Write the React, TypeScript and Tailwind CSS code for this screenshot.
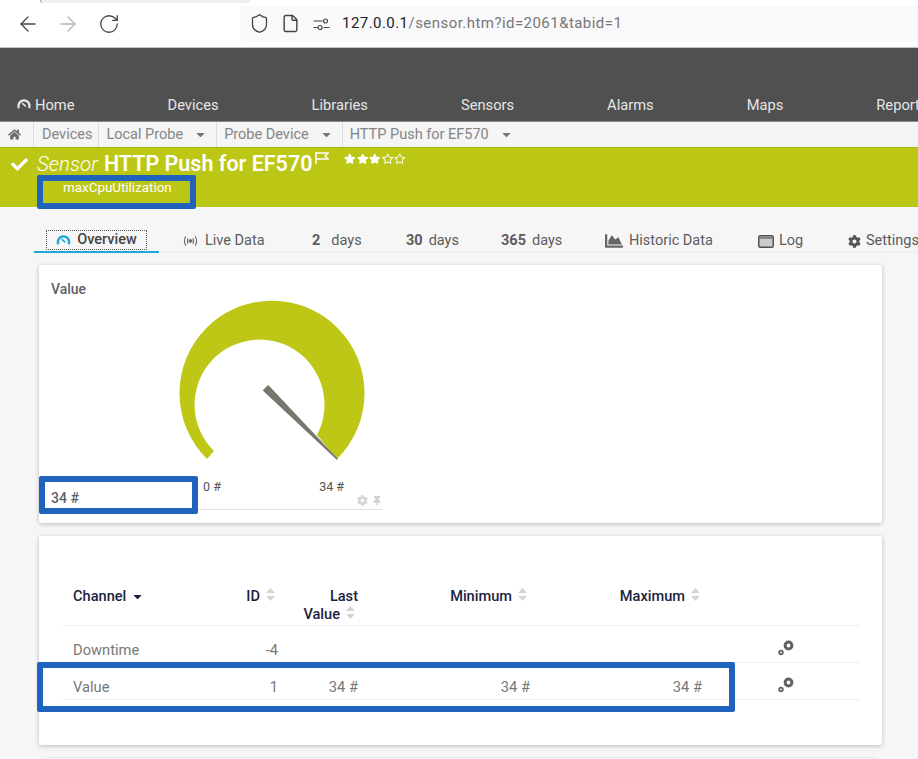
import { ArrowLeft, ArrowRight, RotateCw, Shield, File } from 'lucide-react';
import { FaHome, FaCog, FaThumbtack, FaChartArea, FaCheck, FaStar, FaRegStar, FaCaretDown } from 'react-icons/fa';

const NAV = ['Devices', 'Libraries', 'Sensors', 'Alarms', 'Maps', 'Reports'];
const ROWS = [
    { name: 'Downtime', id: '-4', last: '', min: '', max: '' },
    { name: 'Value', id: '1', last: '34 #', min: '34 #', max: '34 #' },
];
const GRID = 'grid grid-cols-[150px_66px_80px_172px_172px_1fr]';

const GaugeIcon = ({ className }: { className: string }) => (
    <svg viewBox="0 0 16 14" className={className} fill="none" stroke="currentColor">
        <path d="M2.5 11 A6 6 0 1 1 13.5 11" strokeWidth="2.6" />
        <path d="M6 5.5 L10 9" strokeWidth="1.6" />
    </svg>
);

const SortIcon = () => (
    <svg viewBox="0 0 9 13" className="ml-[6px] mb-[3px] h-[13px] w-[9px] shrink-0 fill-[#d4d4d4]">
        <path d="M4.5 0 L9 5 H0 Z" />
        <path d="M4.5 13 L9 8 H0 Z" />
    </svg>
);

const ChannelIcon = () => (
    <svg viewBox="0 0 16 16" className="h-[16px] w-[16px] fill-none stroke-[#606060]">
        <circle cx="10.5" cy="5.5" r="3.4" strokeWidth="3" />
        <circle cx="3" cy="12.5" r="1.8" strokeWidth="1.8" />
    </svg>
);

const Crumb = ({ label, caret }: { label: string; caret?: boolean }) => (
    <div className={`flex h-full items-center border-l border-[#dcdcdc] ${caret ? 'pl-[7px]' : 'pl-[8px] pr-[6px]'}`}>
        <span>{label}</span>
        {caret && <FaCaretDown className="ml-[11px] mr-[9px] text-[13px] text-[#777]" />}
    </div>
);

const Tab = ({ icon, children, className }: { icon?: React.ReactNode; children: React.ReactNode; className: string }) => (
    <div className={`flex shrink-0 items-center ${className}`}>
        {icon}
        {children}
    </div>
);

export default function App() {
    return (
        <div className="relative h-[759px] w-[918px] overflow-hidden bg-[#f6f6f6] font-['Roboto',sans-serif]">
            {/* browser bar */}
            <div className="relative flex h-[48px] items-center border-b border-[#c4c4c4] bg-white">
                <div className="absolute left-[40px] top-0 h-[3px] w-[210px] rounded-b border-l border-[#999] bg-[#efefef]" />
                <ArrowLeft className="ml-[16px] h-[24px] w-[24px] text-[#444]" strokeWidth={1.3} />
                <ArrowRight className="ml-[16px] h-[24px] w-[24px] text-[#b5b5b5]" strokeWidth={1.3} />
                <RotateCw className="ml-[18px] h-[22px] w-[22px] text-[#444]" strokeWidth={1.4} />
                <div className="ml-[120px] flex h-[36px] flex-1 items-center rounded-l-md bg-[#f9f9fb] pl-[9px]">
                    <Shield className="h-[21px] w-[21px] text-[#444]" strokeWidth={1.5} />
                    <File className="ml-[11px] h-[19px] w-[19px] text-[#444]" strokeWidth={1.8} />
                    <svg viewBox="0 0 16 14" className="ml-[13px] h-[14px] w-[17px] fill-none stroke-[#444]">
                        <path d="M0 4 H9 M0 10.5 H4 M10 10.5 H16" strokeWidth="1.2" />
                        <circle cx="12" cy="4" r="2" strokeWidth="1.2" />
                        <circle cx="6.5" cy="10.5" r="2" strokeWidth="1.2" />
                    </svg>
                    <span className="ml-[12px] text-[15px] tracking-[0.45px] text-[#777]">
                        <span className="text-[#222]">127.0.0.1</span>/sensor.htm?id=2061&amp;tabid=1
                    </span>
                </div>
            </div>

            {/* main nav */}
            <div className="flex h-[74px] items-end border-b border-[#8c8c8c] bg-[#505050] pb-[5px] pl-[16px] text-[14.7px] text-[#e6e6e6]">
                <div className="flex shrink-0 items-center gap-[3px]">
                    <GaugeIcon className="h-[13px] w-[16px]" />
                    <span>Home</span>
                </div>
                {NAV.map((item) => (
                    <span key={item} className="ml-[93px] shrink-0">
                        {item}
                    </span>
                ))}
            </div>

            {/* breadcrumb */}
            <div className="flex h-[25px] items-center bg-[#f5f5f5] text-[14.5px] text-[#858585]">
                <div className="flex w-[33px] justify-center pr-[4px]">
                    <FaHome className="text-[13px] text-[#6b6b6b]" />
                </div>
                <Crumb label="Devices" />
                <Crumb label="Local Probe" caret />
                <Crumb label="Probe Device" caret />
                <Crumb label="HTTP Push for EF570" caret />
            </div>

            {/* sensor banner */}
            <div className="h-[60px] border-t border-[#a9b20f] bg-[#bcc614] text-white">
                <div className="flex items-start pl-[11px] pt-[3px]">
                    <FaCheck className="mt-[5px] text-[17px]" />
                    <span className="ml-[9px] text-[20.5px] leading-[26px] font-light italic">Sensor</span>
                    <span className="ml-[6px] text-[21.5px] leading-[26px] font-semibold">HTTP Push for EF570</span>
                    <svg viewBox="0 0 14 12" className="ml-[3px] mt-[1px] h-[12px] w-[14px] fill-none stroke-white">
                        <path d="M1 0 V12 M1 1 H13 L10 4 L13 7 H1" strokeWidth="1.5" />
                    </svg>
                    <div className="ml-[15px] mt-[2px] flex gap-[1px] text-[11.5px]">
                        <FaStar />
                        <FaStar />
                        <FaStar />
                        <FaRegStar />
                        <FaRegStar />
                    </div>
                </div>
                <div className="pl-[63px] pt-[3px] text-[13.4px] leading-[16px]">maxCpuUtilization</div>
            </div>

            {/* tabs */}
            <div className="ml-[34px] mt-[23px] flex h-[23px] items-center border-b border-[#ececec] text-[14.5px] text-[#5c5c5c]">
                <div className="relative flex h-[23px] w-[125px] shrink-0 items-center justify-center border-b-2 border-[#1ea8d8]">
                    <div className="flex h-[20px] items-center gap-[6px] border border-dotted border-[#555] px-[9px] font-medium text-[#444]">
                        <GaugeIcon className="h-[13px] w-[15px] text-[#1ea8d8]" />
                        Overview
                    </div>
                </div>
                <Tab className="ml-[24px] w-[107px]" icon={<svg viewBox="0 0 16 12" className="mr-[7px] h-[12px] w-[15px] fill-none stroke-[#666]"><path d="M3 1 Q0 6 3 11 M5.5 3 Q4 6 5.5 9 M13 1 Q16 6 13 11 M10.5 3 Q12 6 10.5 9" strokeWidth="1.2" /><circle cx="8" cy="6" r="1.5" className="fill-[#666]" /></svg>}>
                    Live Data
                </Tab>
                <Tab className="ml-[22px] w-[94px]"><b className="mr-[11px] font-bold">2</b> days</Tab>
                <Tab className="w-[95px]"><b className="mr-[6px] font-bold">30</b> days</Tab>
                <Tab className="w-[104px]"><b className="mr-[6px] font-bold">365</b> days</Tab>
                <Tab className="w-[153px]" icon={<FaChartArea className="mr-[6px] text-[18px] text-[#666]" />}>Historic Data</Tab>
                <Tab className="w-[90px]" icon={<svg viewBox="0 0 16 13" className="mr-[5px] h-[13px] w-[16px]"><rect x="0.5" y="0.5" width="15" height="12" rx="1.5" className="fill-[#888] stroke-[#555]" /><rect x="2" y="4" width="12" height="7" className="fill-[#ccc]" /></svg>}>Log</Tab>
                <Tab className="w-[80px]" icon={<FaCog className="mr-[5px] text-[13px] text-[#555]" />}>Settings</Tab>
            </div>

            {/* gauge card */}
            <div className="ml-[39px] mt-[12px] h-[258px] w-[843px] rounded-[2px] bg-white pl-[12px] pt-[15px] shadow-[0_1px_4px_rgba(0,0,0,0.25)]">
                <div className="text-[14px] leading-[18px] font-medium text-[#5f5f66]">Value</div>
                <div className="flex">
                    <div className="w-[128px] shrink-0 pt-[191px] text-[14px] leading-[18px] font-medium text-[#5f5f66]">34 #</div>
                    <div className="w-[204px] shrink-0">
                        <svg viewBox="-21 -3 204 173" className="h-[173px] w-[204px]">
                            <path d="M7 158 A92.5 92.5 0 1 1 137 158 L117 134 A65 65 0 1 0 14 150 Z" className="fill-[#bec716]" />
                            <path d="M63.8 89.4 L68.2 85 L137 158 Z" className="fill-[#77776f] stroke-[#77776f]" strokeLinejoin="round" strokeWidth="1.5" />
                        </svg>
                        <div className="flex h-[39px] justify-between border-b border-[#e2e2e2] pl-[24px] pr-[39px] pt-[8px] text-[12.5px] leading-[16px] text-[#555]">
                            <span>0 #</span>
                            <span>34 #</span>
                        </div>
                    </div>
                </div>
            </div>

            {/* channels card */}
            <div className="ml-[39px] mt-[13px] h-[209px] w-[843px] rounded-[2px] bg-white px-[23px] pt-[51px] shadow-[0_1px_4px_rgba(0,0,0,0.25)]">
                <div className={`${GRID} h-[39px] border-b border-[#eeeeee] text-[14.6px] leading-[18px] font-medium text-[#1c2340]`}>
                    <div className="flex h-[18px] items-center pl-[11px]">
                        Channel
                        <FaCaretDown className="ml-[5px] text-[13px]" />
                    </div>
                    <div className="flex h-[18px] items-center justify-end pr-[3px]">ID<SortIcon /></div>
                    <div className="text-right">
                        Last
                        <div className="flex items-center justify-end pr-[3px]">Value<SortIcon /></div>
                    </div>
                    <div className="flex h-[18px] items-center justify-end pr-[3px]">Minimum<SortIcon /></div>
                    <div className="flex h-[18px] items-center justify-end pr-[2px]">Maximum<SortIcon /></div>
                    <div />
                </div>
                {ROWS.map((row) => (
                    <div key={row.name} className={`${GRID} h-[37px] items-center border-b border-[#eeeeee] pt-[12px] text-[14.7px] text-[#777]`}>
                        <div className="pl-[11px]">{row.name}</div>
                        <div className="text-right">{row.id}</div>
                        <div className="text-right">{row.last}</div>
                        <div className="text-right">{row.min}</div>
                        <div className="text-right">{row.max}</div>
                        <div className="mb-[5px] pl-[76px]"><ChannelIcon /></div>
                    </div>
                ))}
            </div>

            {/* faint top edge of the next card */}
            <div className="ml-[46px] mt-[12px] h-px w-[830px] bg-[#e8e8e8]" />

            {/* gauge footer icons */}
            <div className="absolute left-[357px] top-[495px] flex items-center gap-[4px] text-[11px] text-[#d4d4d4]">
                <FaCog />
                <FaThumbtack className="text-[10px]" />
            </div>

            {/* blue annotation boxes */}
            <div className="absolute left-[37px] top-[175px] h-[34px] w-[159px] rounded-[2px] border-[6px] border-[#1f63bd]" />
            <div className="absolute left-[39px] top-[476px] h-[38px] w-[159px] rounded-[2px] border-[6px] border-[#1f63bd]" />
            <div className="absolute left-[37px] top-[662px] h-[50px] w-[698px] rounded-[2px] border-[6px] border-[#1f63bd]" />
        </div>
    );
}
